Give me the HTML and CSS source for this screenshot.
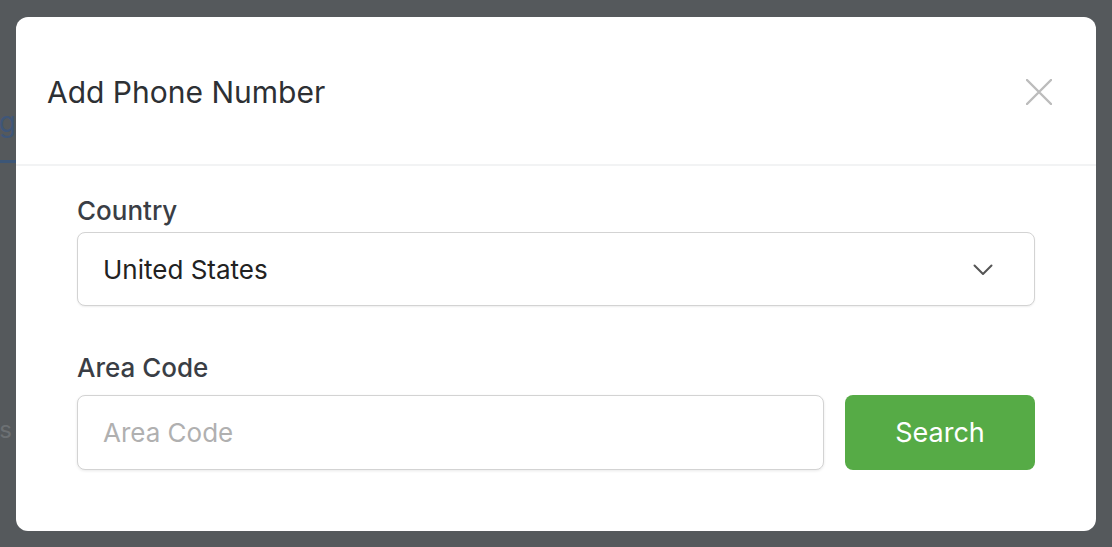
FILE: index.html
```html
<!DOCTYPE html>
<html lang="en">
<head>
    <meta charset="UTF-8">
    <meta name="viewport" content="width=device-width, initial-scale=1.0">
    <title>Add Phone Number</title>
    <link rel="stylesheet" href="styles.css">
</head>
<body>

    <!-- page behind the dialog -->
    <div class="page">
        <div class="page-tabs">
            <div class="tab active"><span>Messaging</span></div>
        </div>
        <div class="page-row"><span>Numbers</span></div>
    </div>

    <!-- Add Phone Number dialog -->
    <div class="modal">
        <div class="modal-header">
            <h2 class="modal-title">Add Phone Number</h2>
            <button class="close-btn" aria-label="Close">
                <svg width="26" height="26" viewBox="0 0 26 26">
                    <path d="M1 1 L25 25 M25 1 L1 25" stroke="#bcbcbc" stroke-width="2.4" stroke-linecap="round" fill="none"/>
                </svg>
            </button>
        </div>

        <div class="modal-body">
            <label class="field-label" for="country">Country</label>
            <div class="select-wrap">
                <select id="country" class="select">
                    <option>United States</option>
                    <option>Canada</option>
                    <option>United Kingdom</option>
                </select>
                <svg class="chevron" width="20" height="12" viewBox="0 0 20 12">
                    <path d="M1.5 1.5 L10 10 L18.5 1.5" stroke="#555" stroke-width="2" stroke-linecap="round" stroke-linejoin="round" fill="none"/>
                </svg>
            </div>

            <label class="field-label area-label" for="area_code">Area Code</label>
            <div class="search-row">
                <input type="text" id="area_code" class="input" placeholder="Area Code">
                <button class="search-btn">Search</button>
            </div>
        </div>
    </div>

</body>
</html>
```

FILE: styles.css
```css
* { box-sizing: border-box; }
body { margin: 0; height: 547px; overflow: hidden; background: #55595c; font-family: Inter, "Noto Sans", Arial, sans-serif; color: #2b2f33; position: relative; }

.page { padding-top: 104px; }
.page-tabs { display: flex; width: 16px; overflow: hidden; justify-content: flex-end; border-bottom: 3px solid #3c5677; }
.tab { white-space: nowrap; font-size: 28px; line-height: 36px; color: #3f5678; padding-bottom: 20px; }
.page-row { display: flex; width: 12px; overflow: hidden; justify-content: flex-end; margin-top: 252px; }
.page-row span { white-space: nowrap; font-size: 24px; color: #6c7073; }

.modal { position: absolute; top: 17px; left: 16px; width: 1080px; height: 514px; background: #fff; border-radius: 12px; }
.modal-header { height: 149px; display: flex; align-items: center; justify-content: space-between; padding: 2px 44px 0 31px; border-bottom: 2px solid #f2f3f4; }
.modal-title { margin: 0; font-size: 30px; font-weight: 400; color: #2d3034; }
.close-btn { border: none; background: none; padding: 0; cursor: pointer; display: flex; }

.modal-body { padding: 29px 61px 61px; }
.field-label { display: block; font-size: 26px; font-weight: 500; line-height: 31px; color: #3a3e45; margin-bottom: 6px; }
.area-label { margin-top: 46px; margin-bottom: 12px; }

.select-wrap { position: relative; }
.select { width: 100%; height: 74px; appearance: none; -webkit-appearance: none; border: 1.5px solid #d3d3d3; border-radius: 8px; background: #fff; padding: 0 25px; font-family: inherit; font-size: 26px; color: #222; box-shadow: 0 1px 2px rgba(0,0,0,0.07); }
.chevron { position: absolute; right: 42px; top: 32px; pointer-events: none; }

.search-row { display: flex; gap: 21px; }
.input { flex: 1; height: 75px; border: 1.5px solid #d3d3d3; border-radius: 8px; padding: 0 25px; font-family: inherit; font-size: 26px; color: #222; box-shadow: 0 1px 3px rgba(0,0,0,0.09); }
.input::placeholder { color: #b0b0b0; }
.search-btn { width: 190px; height: 75px; border: none; border-radius: 8px; background: #56ab46; color: #fff; font-family: inherit; font-size: 27px; cursor: pointer; }
```
